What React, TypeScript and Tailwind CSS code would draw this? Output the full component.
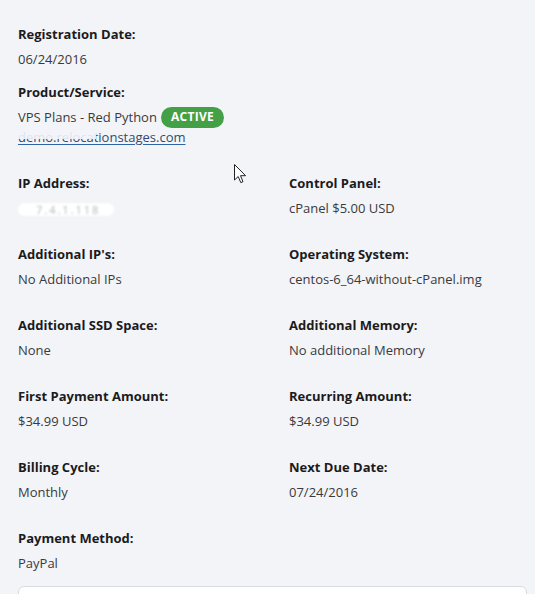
import React from 'react'

type Field = { label: string; value: React.ReactNode }

const rows: [Field, Field | null][] = [
  [
    { label: 'IP Address:', value: <BlurredIp /> },
    { label: 'Control Panel:', value: 'cPanel $5.00 USD' },
  ],
  [
    { label: "Additional IP's:", value: 'No Additional IPs' },
    { label: 'Operating System:', value: 'centos-6_64-without-cPanel.img' },
  ],
  [
    { label: 'Additional SSD Space:', value: 'None' },
    { label: 'Additional Memory:', value: 'No additional Memory' },
  ],
  [
    { label: 'First Payment Amount:', value: '$34.99 USD' },
    { label: 'Recurring Amount:', value: '$34.99 USD' },
  ],
  [
    { label: 'Billing Cycle:', value: 'Monthly' },
    { label: 'Next Due Date:', value: '07/24/2016' },
  ],
  [{ label: 'Payment Method:', value: 'PayPal' }, null],
]

function BlurredIp() {
  return (
    <span className="inline-flex h-[13px] w-[96px] items-center rounded-full bg-white pl-[18px] align-middle text-[11px] tracking-[2px] text-[#b4b8bf] blur-[0.8px]">
      7.4.1.118
    </span>
  )
}

function Item({ field }: { field: Field }) {
  return (
    <div>
      <p className="text-[13px] font-bold leading-5 text-[#1b1b1d]">{field.label}</p>
      <div className="mt-[5px] h-5 text-[13px] leading-5 text-[#3a3a3d]">{field.value}</div>
    </div>
  )
}

function Cursor() {
  return (
    <svg
      className="pointer-events-none absolute left-[234px] top-[164px]"
      width="13"
      height="20"
      viewBox="0 0 13 20"
    >
      <path
        d="M0.5 0.5 L0.5 16 L4.2 12.5 L6.8 18.6 L9 17.7 L6.5 11.7 L11.6 11.7 Z"
        fill="#fff"
        stroke="#222"
        strokeWidth="1"
        strokeLinejoin="round"
      />
    </svg>
  )
}

export default function App() {
  return (
    <div
      className="relative h-[594px] w-[535px] overflow-hidden bg-[#f3f4f8]"
      style={{ fontFamily: '"Open Sans", "Noto Sans", sans-serif' }}
    >
      <Cursor />
      <div className="px-[18px] pt-[24px]">
        <Item field={{ label: 'Registration Date:', value: '06/24/2016' }} />

        <div className="mt-[13px]">
          <p className="text-[13px] font-bold leading-5 text-[#1b1b1d]">Product/Service:</p>
          <div className="mt-[5px] flex h-5 items-center text-[13px] leading-5 text-[#3a3a3d]">
            VPS Plans - Red Python
            <span className="ml-[4px] inline-flex h-[21px] items-center rounded-full bg-[#43a047] px-[10px] text-[12px] font-bold tracking-[0.3px] text-white">
              ACTIVE
            </span>
          </div>
          <div className="relative w-fit">
            <a className="block text-[13px] leading-5 text-[#2f4a73] underline decoration-[#2f63a8] underline-offset-[2px]">
              demo.relocationstages.com
            </a>
            <div className="absolute left-0 top-0 z-10 h-[12px] w-[78px] bg-[#f3f4f8] opacity-90" />
          </div>
        </div>

        <div className="mt-[26px] grid grid-cols-[271px_1fr] gap-y-[26px]">
          {rows.map(([left, right], i) => (
            <React.Fragment key={i}>
              <Item field={left} />
              {right ? <Item field={right} /> : <div />}
            </React.Fragment>
          ))}
        </div>
      </div>

      <div className="ml-[18px] mr-[8px] mt-[13px] h-[60px] rounded-[6px] border border-[#d9dbe0] bg-white" />
    </div>
  )
}
